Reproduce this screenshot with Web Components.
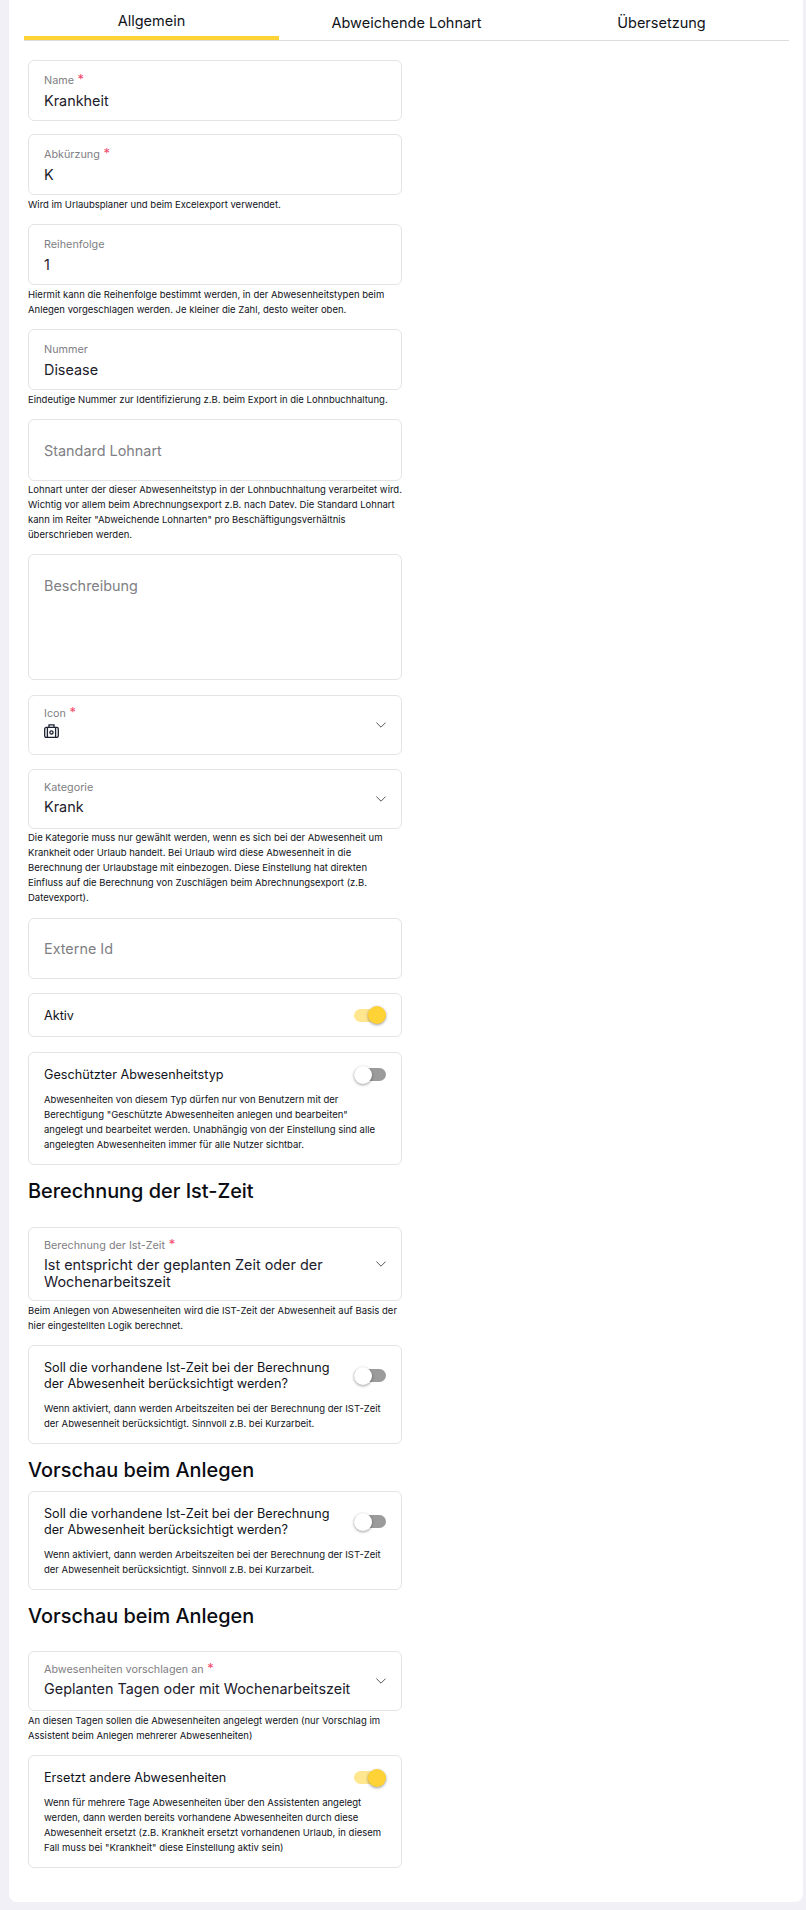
<!DOCTYPE html>
<html lang="de">
<head>
<meta charset="utf-8">
<title>Abwesenheitstyp</title>
<style>
  html, body { margin: 0; background: #f0f0f6; }
  body { font-family: Inter, "Liberation Sans", sans-serif; color: #10131a; }
</style>
</head>
<body>
<template id="tpl-page">
  <style>
    :host { display: block; width: 794px; height: 1902px; margin-left: 9px; background: #fff; border-radius: 0 0 8px 8px; box-sizing: border-box; padding: 0 14px 0 15px; }
    form { display: flex; flex-direction: column; width: 374px; margin: 19.3px 0 0 4px; }
  </style>
  <slot name="tabs"></slot>
  <form><slot></slot></form>
</template>

<template id="tpl-tabs">
  <style>
    :host { display: flex; height: 41px; border-bottom: 1px solid #dcdcdf; box-sizing: border-box; }
    ::slotted(*) { flex: 1; }
  </style>
  <slot></slot>
</template>

<template id="tpl-tab">
  <style>
    :host { display: block; text-align: center; font-size: 14.5px; line-height: 20px; padding-top: 13px; box-sizing: border-box; height: 40px; color: #10131a; }
    :host([active]) { box-shadow: inset 0 -4px 0 #ffd235; padding-top: 11px; }
  </style>
  <slot></slot>
</template>

<template id="tpl-field">
  <style>
    :host { display: block; box-sizing: border-box; min-height: 61.4px; border: 1px solid #e4e4e7; border-radius: 6px; padding: 0 15px 7px; position: relative; background: #fff; }
    .label { font-size: 10.8px; line-height: 14px; color: #808084; padding-top: 13.4px; }
    .label i { font-style: normal; color: #ef4a6a; font-size: 13px; line-height: 0; }
    .value { font-size: 14.4px; line-height: 17px; color: #1c202c; margin-top: 3.3px; }
    :host([required]) .label { padding-top: 12.7px; }
    :host([required]) .value { margin-top: 4.5px; }
    :host([empty]) .label { font-size: 14.4px; line-height: 24px; padding-top: 18.7px; }
    :host([empty]) .value { display: none; }
    :host([tall]) { height: 126px; }
    :host([chevron]) { min-height: 60px; padding-right: 40px; padding-bottom: 10.4px; }
    :host([chevron]) .label { padding-top: 11px; }
    :host([chevron]) .value { margin-top: 3px; }
    svg.chev { position: absolute; right: 15px; top: 50%; margin-top: -3px; width: 10px; height: 6px; }
    :host(:not([chevron])) svg.chev { display: none; }
  </style>
  <div class="label"><span id="l"></span><i id="r"> *</i></div>
  <div class="value"><slot></slot></div>
  <svg class="chev" viewBox="0 0 10 6" fill="none" stroke="#55565a" stroke-width="1"><path d="M.4.6 5 5.2 9.6.6"/></svg>
</template>

<template id="tpl-hint">
  <style>
    :host { display: block; font-size: 9.5px; line-height: 15px; color: #10131a; padding-top: 1.7px; }
  </style>
  <slot></slot>
</template>

<template id="tpl-switch">
  <style>
    :host { display: block; border: 1px solid #e4e4e7; border-radius: 6px; box-sizing: border-box; padding: 13.8px 15px 11.6px; background: #fff; }
    .top { display: flex; align-items: center; justify-content: space-between; gap: 20px; }
    .title { font-size: 12.65px; line-height: 15.4px; color: #10131a; }
    .sw { flex: none; width: 32px; height: 15px; position: relative; }
    .track { position: absolute; left: 0; right: 0; top: 1px; height: 13px; border-radius: 7px; background: #9b9b9b; }
    .knob { position: absolute; left: 0; top: -1.5px; width: 18px; height: 18px; border-radius: 50%; background: #fff; box-shadow: 0 1px 3px rgba(0,0,0,.4); }
    :host([on]) .track { background: #ffe68f; }
    :host([on]) .knob { left: auto; right: 0; background: #ffd235; }
    .text { font-size: 9.5px; line-height: 15px; color: #10131a; margin-top: 10px; }
    :host([bare]) .text { display: none; }
    :host([bare]) { padding-bottom: 12.8px; }
  </style>
  <div class="top"><div class="title" id="t"></div><div class="sw"><div class="track"></div><div class="knob"></div></div></div>
  <div class="text"><slot></slot></div>
</template>

<template id="tpl-heading">
  <style>
    :host { display: block; font-size: 19.9px; line-height: 26px; font-weight: 500; color: #0a0c12; }
  </style>
  <slot></slot>
</template>

<script>
  function stamp(el, id) {
    let root = el.attachShadow({mode: 'open'});
    root.appendChild(document.querySelector(id).content.cloneNode(true));
    return root;
  }

  customElements.define('x-page', class extends HTMLElement {
    constructor() { super(); stamp(this, '#tpl-page'); }
  });
  customElements.define('x-tabs', class extends HTMLElement {
    constructor() { super(); stamp(this, '#tpl-tabs'); }
  });
  customElements.define('x-tab', class extends HTMLElement {
    constructor() { super(); stamp(this, '#tpl-tab'); }
  });
  customElements.define('x-field', class extends HTMLElement {
    constructor() { super(); stamp(this, '#tpl-field'); }
    connectedCallback() {
      this.shadowRoot.querySelector('#l').textContent = this.getAttribute('label');
      if (!this.hasAttribute('required')) this.shadowRoot.querySelector('#r').remove();
    }
  });
  customElements.define('x-hint', class extends HTMLElement {
    constructor() { super(); stamp(this, '#tpl-hint'); }
  });
  customElements.define('x-switch', class extends HTMLElement {
    constructor() { super(); stamp(this, '#tpl-switch'); }
    connectedCallback() {
      this.shadowRoot.querySelector('#t').textContent = this.getAttribute('label');
    }
  });
  customElements.define('x-heading', class extends HTMLElement {
    constructor() { super(); stamp(this, '#tpl-heading'); }
  });
</script>

<x-page>
  <x-tabs slot="tabs">
    <x-tab active>Allgemein</x-tab>
    <x-tab>Abweichende Lohnart</x-tab>
    <x-tab>Übersetzung</x-tab>
  </x-tabs>

  <x-field label="Name" required style="min-height:60.4px">Krankheit</x-field>
  <x-field label="Abkürzung" required style="margin-top:13.6px;min-height:61px">K</x-field>
  <x-hint>Wird im Urlaubsplaner und beim Excelexport verwendet.</x-hint>
  <x-field label="Reihenfolge" style="margin-top:12px">1</x-field>
  <x-hint>Hiermit kann die Reihenfolge bestimmt werden, in der Abwesenheitstypen beim Anlegen vorgeschlagen werden. Je kleiner die Zahl, desto weiter oben.</x-hint>
  <x-field label="Nummer" style="margin-top:12px">Disease</x-field>
  <x-hint>Eindeutige Nummer zur Identifizierung z.B. beim Export in die Lohnbuchhaltung.</x-hint>
  <x-field label="Standard Lohnart" empty style="margin-top:12px"></x-field>
  <x-hint>Lohnart unter der dieser Abwesenheitstyp in der Lohnbuchhaltung verarbeitet wird. Wichtig vor allem beim Abrechnungsexport z.B. nach Datev. Die Standard Lohnart kann im Reiter "Abweichende Lohnarten" pro Beschäftigungsverhältnis überschrieben werden.</x-hint>
  <x-field label="Beschreibung" empty tall style="margin-top:12px"></x-field>
  <x-field label="Icon" required chevron style="margin-top:14.3px">
    <svg width="15" height="14" viewBox="0 0 15 14" fill="none" stroke="#1d2230" stroke-width="1.3" style="display:block;margin-top:1px"><rect x=".7" y="3.4" width="13.6" height="10" rx="1.6"/><path d="M5 3.4V.9h5v2.5M3.4 3.4v10M11.6 3.4v10"/><circle cx="7.5" cy="8.4" r="1.6"/></svg>
  </x-field>
  <x-field label="Kategorie" chevron style="margin-top:14.2px">Krank</x-field>
  <x-hint>Die Kategorie muss nur gewählt werden, wenn es sich bei der Abwesenheit um Krankheit oder Urlaub handelt. Bei Urlaub wird diese Abwesenheit in die Berechnung der Urlaubstage mit einbezogen. Diese Einstellung hat direkten Einfluss auf die Berechnung von Zuschlägen beim Abrechnungsexport (z.B. Datevexport).</x-hint>
  <x-field label="Externe Id" empty style="margin-top:12.4px"></x-field>
  <x-switch label="Aktiv" on bare style="margin-top:13.6px"></x-switch>
  <x-switch label="Geschützter Abwesenheitstyp" style="margin-top:15.4px">Abwesenheiten von diesem Typ dürfen nur von Benutzern mit der Berechtigung "Geschützte Abwesenheiten anlegen und bearbeiten" angelegt und bearbeitet werden. Unabhängig von der Einstellung sind alle angelegten Abwesenheiten immer für alle Nutzer sichtbar.</x-switch>

  <x-heading style="margin-top:12.7px">Berechnung der Ist-Zeit</x-heading>
  <x-field label="Berechnung der Ist-Zeit" required chevron style="margin-top:23.3px">Ist entspricht der geplanten Zeit oder der Wochenarbeitszeit</x-field>
  <x-hint>Beim Anlegen von Abwesenheiten wird die IST-Zeit der Abwesenheit auf Basis der hier eingestellten Logik berechnet.</x-hint>
  <x-switch label="Soll die vorhandene Ist-Zeit bei der Berechnung der Abwesenheit berücksichtigt werden?" style="margin-top:12.3px">Wenn aktiviert, dann werden Arbeitszeiten bei der Berechnung der IST-Zeit der Abwesenheit berücksichtigt. Sinnvoll z.B. bei Kurzarbeit.</x-switch>

  <x-heading style="margin-top:13.7px">Vorschau beim Anlegen</x-heading>
  <x-switch label="Soll die vorhandene Ist-Zeit bei der Berechnung der Abwesenheit berücksichtigt werden?" style="margin-top:8.3px">Wenn aktiviert, dann werden Arbeitszeiten bei der Berechnung der IST-Zeit der Abwesenheit berücksichtigt. Sinnvoll z.B. bei Kurzarbeit.</x-switch>

  <x-heading style="margin-top:13.7px">Vorschau beim Anlegen</x-heading>
  <x-field label="Abwesenheiten vorschlagen an" required chevron style="margin-top:22px">Geplanten Tagen oder mit Wochenarbeitszeit</x-field>
  <x-hint>An diesen Tagen sollen die Abwesenheiten angelegt werden (nur Vorschlag im Assistent beim Anlegen mehrerer Abwesenheiten)</x-hint>
  <x-switch label="Ersetzt andere Abwesenheiten" on style="margin-top:12px">Wenn für mehrere Tage Abwesenheiten über den Assistenten angelegt werden, dann werden bereits vorhandene Abwesenheiten durch diese Abwesenheit ersetzt (z.B. Krankheit ersetzt vorhandenen Urlaub, in diesem Fall muss bei "Krankheit" diese Einstellung aktiv sein)</x-switch>
</x-page>
</body>
</html>
